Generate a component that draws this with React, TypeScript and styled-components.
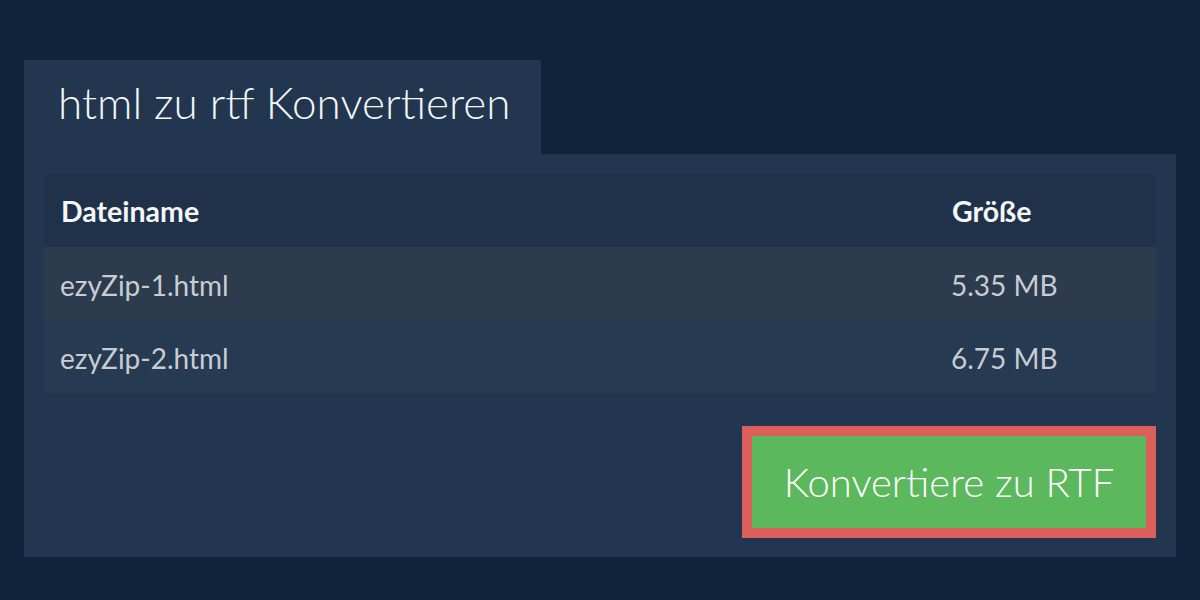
import React from 'react';
import styled, { createGlobalStyle } from 'styled-components';

//
//
//

type FileRow = {
  name: string;
  size: string;
};

const files: FileRow[] = [
  { name: 'ezyZip-1.html', size: '5.35 MB' },
  { name: 'ezyZip-2.html', size: '6.75 MB' },
];

//
//
//

const App = () => {
  return (
    <>
      <GlobalStyle />
      <Page>
        <Tab>html zu rtf Konvertieren</Tab>
        <Panel>
          <Table>
            <colgroup>
              <col />
              <SizeCol />
            </colgroup>
            <thead>
              <HeadRow>
                <HeadCell>Dateiname</HeadCell>
                <HeadCell>Größe</HeadCell>
              </HeadRow>
            </thead>
            <tbody>
              {files.map((file, i) => (
                <BodyRow key={file.name} $odd={i % 2 === 0}>
                  <Cell>{file.name}</Cell>
                  <Cell>{file.size}</Cell>
                </BodyRow>
              ))}
            </tbody>
          </Table>
          <Actions>
            <ConvertButton type="button">Konvertiere zu RTF</ConvertButton>
          </Actions>
        </Panel>
      </Page>
    </>
  );
};

//
//
//

const GlobalStyle = createGlobalStyle`
  html, body {
    margin: 0;
    padding: 0;
    background: #10233a;
  }
  body {
    font-family: Lato, "Open Sans", "Liberation Sans", sans-serif;
  }
`;

const Page = styled.div`
  width: 1200px;
  height: 600px;
  box-sizing: border-box;
  padding: 60px 24px 0 24px;
  background: #10233a;
`;

const Tab = styled.h1`
  display: inline-block;
  margin: 0;
  width: 517px;
  height: 94px;
  box-sizing: border-box;
  padding: 18px 0 0 34px;
  background: #22364f;
  color: #f4f6f8;
  font-weight: 300;
  font-size: 44px;
  line-height: 48px;
  vertical-align: top;
`;

const Panel = styled.div`
  width: 1152px;
  height: 403px;
  box-sizing: border-box;
  padding: 20px 20px 0 20px;
  background: #22364f;
`;

const Table = styled.table`
  width: 100%;
  table-layout: fixed;
  border-collapse: collapse;
`;

const SizeCol = styled.col`
  width: 221px;
`;

const HeadRow = styled.tr`
  height: 73px;
  background: #1f324a;
`;

const HeadCell = styled.th`
  text-align: left;
  padding: 0 0 0 17px;
  color: #f4f6f8;
  font-size: 28.5px;
  font-weight: 700;
`;

const BodyRow = styled.tr<{ $odd?: boolean }>`
  height: 73px;
  background: ${(p) => (p.$odd ? '#2c3b4d' : '#263a52')};
`;

const Cell = styled.td`
  padding: 3px 0 0 16px;
  color: #c8cdd3;
  font-size: 28px;
  font-weight: 400;
`;

const Actions = styled.div`
  display: flex;
  justify-content: flex-end;
  margin-top: 33px;
`;

const ConvertButton = styled.button`
  width: 414px;
  height: 112px;
  box-sizing: border-box;
  border: 10px solid #dc5f5c;
  background: #5cb85c;
  color: #ffffff;
  font-family: Lato, "Open Sans", "Liberation Sans", sans-serif;
  font-weight: 300;
  font-size: 40px;
  cursor: pointer;
`;

export default App;
